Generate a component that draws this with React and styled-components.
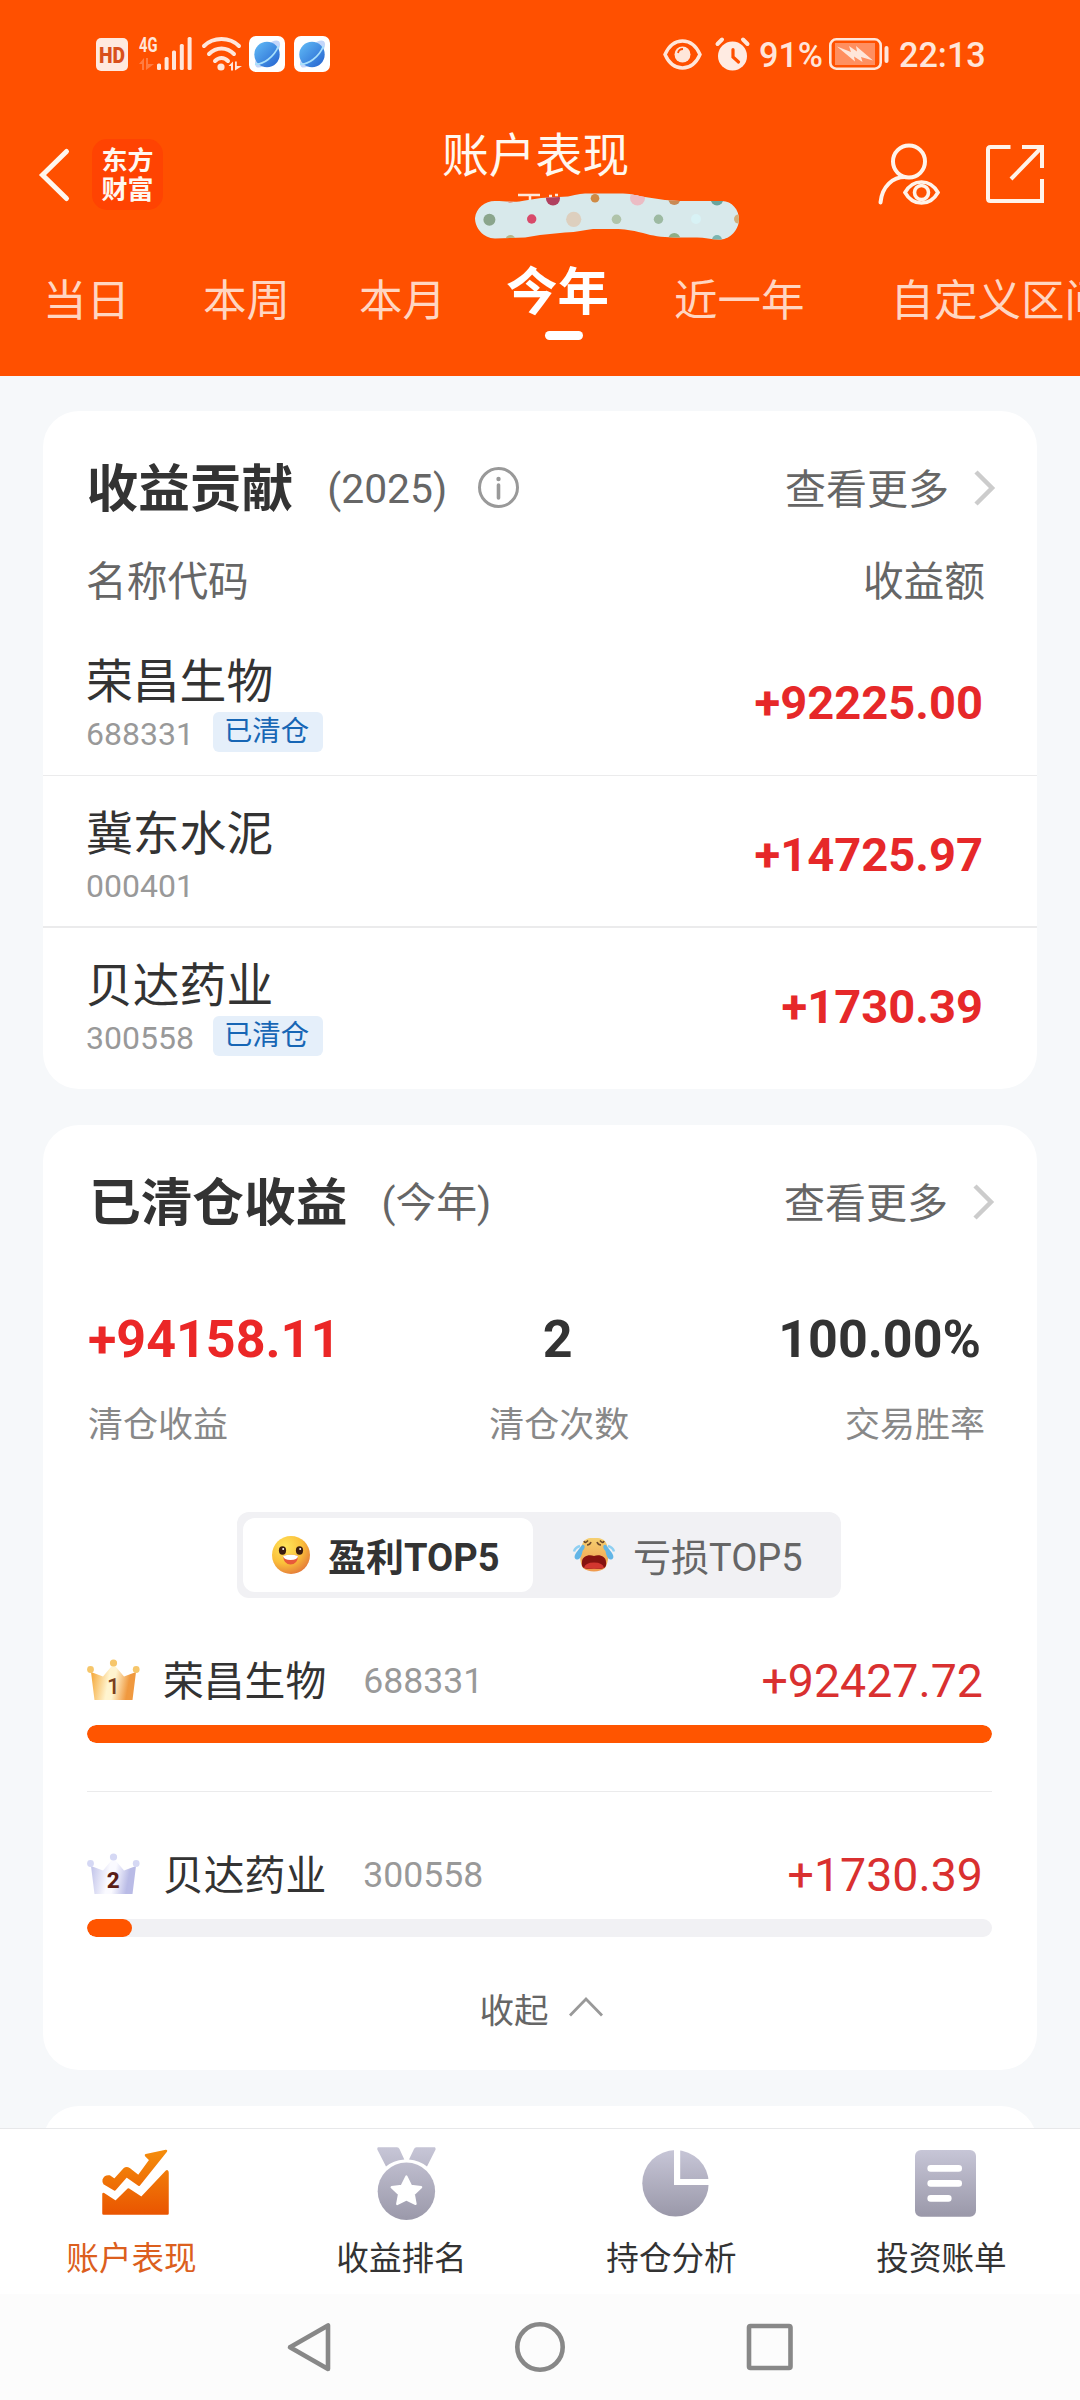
import React from "react";
import styled, { createGlobalStyle } from "styled-components";

const GlobalStyle = createGlobalStyle`
  *, *::before, *::after { box-sizing: border-box; }
  body { margin: 0; background: #f6f8fa; }
  svg { display: block; flex: none; overflow: visible; }
`;

const Screen = styled.div`
  width: 1080px;
  height: 2400px;
  overflow: hidden;
  display: flex;
  flex-direction: column;
  background: #f6f8fa;
  color: #333;
  font-family: Roboto, "Noto Sans CJK SC", sans-serif;
  white-space: nowrap;
`;

/* ---------- header ---------- */
const Header = styled.header`
  flex: none;
  height: 376px;
  background: #ff5000;
  color: #fff8f0;
  overflow: hidden;
`;

const StatusBar = styled.div`
  height: 108px;
  padding: 0 96px;
  display: flex;
  align-items: center;
  justify-content: space-between;
`;

const StatusGroup = styled.div`
  display: flex;
  align-items: center;
`;

const Spacer = styled.span`
  flex: none;
  width: ${(p) => p.$w}px;
`;

const StatusText = styled.span`
  width: ${(p) => p.$w}px;
  font-size: 34.2px;
  font-weight: 500;
  line-height: 40px;
  padding-top: 2px;
  color: #ffe6da;
`;

const NavBar = styled.div`
  height: 134px;
  padding: 0 36px 0 39px;
  display: flex;
  align-items: flex-start;
`;

const BackButton = styled.div`
  width: 53px;
  padding-top: 40px;
`;

const BrandLogo = styled.div`
  width: 71px;
  height: 71px;
  margin-top: 31px;
  padding-top: 8px;
  border-radius: 15px;
  background: #ff4302;
  text-align: center;
  font-size: 26px;
  line-height: 29px;
  font-weight: 700;
`;

const TitleBlock = styled.div`
  margin-left: 279px;
  padding-top: 18px;
`;

const PageTitle = styled.h1`
  margin: 0;
  font-size: 46.8px;
  line-height: 60px;
  font-weight: 400;
`;

const AccountMask = styled.div`
  margin: 4px 0 0 33px;
`;

const NavActions = styled.div`
  margin-left: auto;
  padding-top: 35px;
  display: flex;
  gap: 46px;
`;

const PeriodTabs = styled.nav`
  display: flex;
  padding-left: 43px;
`;

const PeriodTab = styled.span`
  flex: none;
  margin-left: ${(p) => p.$gap}px;
  padding-top: ${(p) => (p.$active ? 21 : 30)}px;
  display: flex;
  flex-direction: column;
  align-items: center;
  font-size: ${(p) => (p.$active ? 51.5 : 43.5)}px;
  font-weight: ${(p) => (p.$active ? 700 : 400)};
  line-height: 60px;
  color: ${(p) => (p.$active ? "#fff" : "#ffd6c2")};

  &::after {
    content: "";
    display: ${(p) => (p.$active ? "block" : "none")};
    width: 38px;
    height: 9px;
    margin: 8px 0 0 12px;
    border-radius: 5px;
    background: #fff;
  }
`;

/* ---------- cards ---------- */
const Content = styled.main`
  flex: 1;
  min-height: 0;
  overflow: hidden;
  padding: 35px 43px 0;
  display: flex;
  flex-direction: column;
  gap: 36px;
`;

const Card = styled.section`
  flex: none;
  height: ${(p) => p.$h}px;
  padding-top: 43px;
  border-radius: 36px;
  background: #fff;
`;

const CardHeader = styled.div`
  height: 72px;
  padding: 0 ${(p) => p.$end}px 0 ${(p) => p.$start}px;
  display: flex;
  align-items: center;
`;

const CardTitle = styled.h2`
  margin: 0 ${(p) => p.$gap}px 0 0;
  font-size: 51.7px;
  font-weight: 700;
  line-height: 72px;
`;

const CardNote = styled.span`
  font-size: 40.8px;
  line-height: 70px;
  padding-bottom: 2px;
  color: #666;
  margin-right: 31px;
`;

const MoreLink = styled.span`
  margin-left: auto;
  display: flex;
  align-items: center;
  gap: 25px;
  font-size: 41px;
  line-height: 71px;
  color: #666;

  svg { margin-top: -5px; }
`;

const ColumnHeads = styled.div`
  height: 98px;
  padding: 26px 52px 0 43px;
  display: flex;
  justify-content: space-between;
  font-size: 40.7px;
  line-height: 60px;
  color: #666;
`;

const StockRow = styled.div`
  height: ${(p) => p.$h}px;
  padding: 30px 54px 0 43px;
  display: flex;
  justify-content: space-between;
  border-bottom: ${(p) => p.$line}px solid #ebebec;
`;

const StockName = styled.div`
  font-size: 46.8px;
  line-height: 56px;
`;

const StockMeta = styled.div`
  height: 42px;
  display: flex;
  align-items: flex-start;
  gap: 19px;
  padding-top: 2px;
`;

const StockCode = styled.span`
  width: 108px;
  font-size: 32px;
  line-height: 40px;
  padding-top: 2px;
  color: #999;
`;

const Tag = styled.span`
  width: 110px;
  height: 40px;
  padding-right: 3px;
  border-radius: 6px;
  background: #e5effa;
  color: #1766b5;
  font-size: 28.4px;
  line-height: 40px;
  text-align: center;
`;

const Gain = styled.span`
  font-size: 47.1px;
  line-height: 97px;
  font-weight: 700;
  color: #e62829;
`;

/* ---------- closed positions ---------- */
const Stats = styled.div`
  margin-top: 70px;
  padding: 0 52px 0 45px;
  display: flex;
  justify-content: space-between;
`;

const Stat = styled.div`
  display: flex;
  flex-direction: column;
  align-items: ${(p) => p.$align};
`;

const StatValue = styled.span`
  font-size: 52px;
  line-height: 60px;
  font-weight: 700;
  color: ${(p) => (p.$gain ? "#eb2727" : "#333")};
  margin-right: ${(p) => p.$inset || 0}px;
`;

const StatLabel = styled.span`
  margin-top: 31px;
  font-size: 35px;
  line-height: 50px;
  color: #888;
`;

const Segmented = styled.div`
  width: 604px;
  height: 86px;
  margin: 61px 0 0 194px;
  padding: 6px;
  display: flex;
  border-radius: 12px;
  background: #f1f1f4;
`;

const Segment = styled.div`
  width: 290px;
  height: 74px;
  padding: 0 0 2px ${(p) => (p.$active ? 28 : 39)}px;
  display: flex;
  align-items: center;
  gap: 17px;
  border-radius: 12px;
  background: ${(p) => (p.$active ? "#fff" : "transparent")};
  color: ${(p) => (p.$active ? "#333" : "#666")};
  font-size: 38px;
  font-weight: ${(p) => (p.$active ? 700 : 400)};

  svg { margin-top: 2px; }
`;

const RankItem = styled.div`
  margin: 0 45px 0 44px;
  padding: 52px 0 48px;
  border-bottom: ${(p) => (p.$last ? 0 : 1)}px solid #ebebec;
`;

const RankLine = styled.div`
  height: 64px;
  display: flex;
  align-items: center;
  line-height: 64px;

  > svg { margin-bottom: 5px; }
`;

const RankName = styled.span`
  margin-left: 23px;
  font-size: 40.8px;
`;

const RankCode = styled.span`
  margin-left: 37px;
  padding-bottom: 3px;
  line-height: 60px;
  font-size: 35.6px;
  color: #999;
`;

const RankGain = styled.span`
  margin-left: auto;
  margin-right: 9px;
  padding-bottom: 3px;
  line-height: 60px;
  font-size: 46.5px;
  color: #d93030;
`;

const Track = styled.div`
  height: 18px;
  margin-top: 11px;
  border-radius: 9px;
  background: #f1f1f4;
  overflow: hidden;
`;

const Fill = styled.div`
  height: 100%;
  border-radius: 9px;
  background: #ff5500;
`;

const Collapse = styled.div`
  height: 52px;
  padding-left: 2px;
  display: flex;
  justify-content: center;
  align-items: center;
  gap: 20px;
  font-size: 34.5px;
  line-height: 52px;
  color: #666;
`;

/* ---------- bottom ---------- */
const TabBar = styled.nav`
  flex: none;
  height: 166px;
  display: flex;
  background: #fff;
  border-top: 1px solid #e7e8ea;
`;

const TabItem = styled.div`
  width: 270px;
  padding-top: 13px;
  display: flex;
  flex-direction: column;
  align-items: center;
`;

const TabLabel = styled.span`
  margin: 17px 7px 0 0;
  font-size: 32.6px;
  line-height: 40px;
  color: ${(p) => (p.$active ? "#dc5f1e" : "#333")};
`;

const SystemNav = styled.div`
  flex: none;
  height: 106px;
  display: flex;
  align-items: center;
  justify-content: center;
  gap: 180px;
  background: #fcfcfc;
`;

/* ---------- icons ---------- */
const pale = "#ffe6da";

const HdIcon = () => (
  <svg width="32" height="33" viewBox="0 0 32 33">
    <rect width="32" height="33" rx="5" fill="#ffe9df" />
    <text x="16" y="24.5" textAnchor="middle" textLength="26" lengthAdjust="spacingAndGlyphs" fontSize="21.5" fontWeight="900" fill="#d9501c">HD</text>
  </svg>
);

const SignalIcon = () => (
  <svg width="53" height="34" viewBox="0 0 53 34" fill={pale}>
    <text x="0" y="15" textLength="18.5" lengthAdjust="spacingAndGlyphs" fontSize="20" fontWeight="700">4G</text>
    <path d="M0 27l5-6v12H3v-6zM7 33V21h2v6h6zM10 33V21z" opacity=".3" />
    <rect x="18" y="26.5" width="4" height="6.5" rx="1.5" />
    <rect x="25.6" y="20" width="4" height="13" rx="1.5" />
    <rect x="33" y="13.5" width="4" height="19.5" rx="1.5" />
    <rect x="40.8" y="7" width="4" height="26" rx="1.5" />
    <rect x="48.6" y="0" width="4" height="33" rx="1.5" />
  </svg>
);

const WifiIcon = () => (
  <svg width="41" height="34" viewBox="0 0 41 34" fill="none" stroke={pale} strokeWidth="4" strokeLinecap="round">
    <path d="M2 9Q9 2 19.500 2T37 9M7 17Q12.500 11.500 19.500 11.500T32 17M13 24Q16 21 19.500 21T26 24" />
    <circle cx="19" cy="30" r="3.600" fill={pale} stroke="none" />
    <path d="M26.500 29l4.500-4.500v9h-2V29zM33 33.500v-9h1.800V29H40z" fill={pale} stroke="none" />
  </svg>
);

const PlanetApp = ({ id }) => (
  <svg width="36" height="36" viewBox="0 0 36 36">
    <defs>
      <linearGradient id={id} x1="0" y1="0" x2="1" y2="1">
        <stop offset="0" stopColor="#62bdf7" />
        <stop offset="1" stopColor="#2461cf" />
      </linearGradient>
    </defs>
    <rect width="36" height="36" rx="7" fill="#fff" />
    <ellipse cx="18.500" cy="18" rx="17" ry="7" transform="rotate(-48 18.500 18)" fill="#c3d6fa" />
    <circle cx="18" cy="18.500" r="12.700" fill={`url(#${id})`} />
    <path d="M6 28c8 1 19-7 23.500-18" fill="none" stroke="#a8e0fb" strokeWidth="1.800" />
  </svg>
);

const EyeIcon = () => (
  <svg width="39" height="31" viewBox="0 0 39 31">
    <path d="M2 15.500C10-2.500 29-2.500 37 15.500C29 33.500 10 33.500 2 15.500Z" fill="none" stroke={pale} strokeWidth="3.400" />
    <circle cx="19.500" cy="15.500" r="8" fill={pale} />
    <path d="M15 14q.7-4 5-4" stroke="#ff5000" strokeWidth="1.800" fill="none" />
  </svg>
);

const AlarmIcon = () => (
  <svg width="35" height="34" viewBox="0 0 35 34" strokeLinecap="round" fill="none">
    <circle cx="17.500" cy="19" r="14.500" fill="#ffebe2" />
    <path d="M2.500 7l4.500-4.500M28 2.500L32.500 7" stroke={pale} strokeWidth="4" />
    <path d="M18 12.500v7.500l5.500 5" stroke="#ff5000" strokeWidth="3.200" />
  </svg>
);

const BatteryIcon = () => (
  <svg width="60" height="32" viewBox="0 0 60 32">
    <rect x="1.300" y="1.300" width="50.400" height="29.400" rx="6" fill="none" stroke={pale} strokeWidth="2.600" />
    <rect x="6" y="5" width="40" height="22" fill="#ff8f60" />
    <path d="M8 8.500L22 14L20 8L28 13.500L27 8L44 22.500L32 19L33.500 24L25 18.500L26 23.500Z" fill={pale} />
    <rect x="55.500" y="8" width="4" height="17" rx="2" fill={pale} />
  </svg>
);

const BackIcon = () => (
  <svg width="31" height="54" viewBox="0 0 31 54" fill="none" stroke="#fff6ee" strokeWidth="5" strokeLinecap="round">
    <path d="M27.500 3.500L3.500 27l24 23.500" />
  </svg>
);

const MaskStroke = () => (
  <svg width="264" height="50" viewBox="0 0 264 50">
    <defs>
      <clipPath id="mask-band">
        <path d="M0 28C1 18 10 11 20 11C32 11 40 13 50 10.500L66 8L93 6.500C103 4 108 3.500 115 3.500H148C158 4 162 5.500 170 7L190 10L205 11H247C257 11 264 20 264 29C264 40 255 49 246 49.500C238 50 230 47.500 222 47.500H200C185 47 178 46 168 43C155 40 150 39 140 39H118C108 40 103 42 90 42.500L65 45L50 47.500L20 48.500C8 48 0 38 0 28Z" />
      </clipPath>
    </defs>
    <path d="M43 5h22M55 5v6M74 6h3M80 5h3" stroke="#ffe7d8" strokeWidth="2.500" fill="none" />
    <g clipPath="url(#mask-band)">
      <rect width="264" height="50" fill="#d8e9eb" />
      <circle cx="14.400" cy="29.700" r="6" fill="#8aa58c" />
      <circle cx="35.400" cy="8" r="5" fill="#e3a495" />
      <circle cx="35.400" cy="50" r="5" fill="#b5b58a" />
      <circle cx="56.700" cy="29" r="4.700" fill="#d84a6a" />
      <circle cx="78" cy="8.500" r="7" fill="#b0405f" />
      <circle cx="98.700" cy="29.300" r="7.600" fill="#ddcfbe" />
      <circle cx="120" cy="8.300" r="4.300" fill="#cf8a45" />
      <circle cx="141.500" cy="29.300" r="4.800" fill="#b0c4aa" />
      <circle cx="162.500" cy="8" r="7.500" fill="#ebbcc4" />
      <circle cx="183.500" cy="29.300" r="4.700" fill="#9dbaa2" />
      <circle cx="199.300" cy="9" r="6" fill="#c98a55" />
      <circle cx="199.300" cy="49" r="6" fill="#8fae85" />
      <circle cx="221" cy="29" r="5" fill="#d8f2f5" />
      <circle cx="242" cy="9" r="6.500" fill="#6aa59d" />
      <circle cx="242" cy="50" r="5" fill="#7ab5b0" />
      <circle cx="263.500" cy="29" r="4.500" fill="#d2ae78" />
    </g>
  </svg>
);

const UserEyeIcon = () => (
  <svg width="62" height="62" viewBox="0 0 62 62" fill="none" stroke="#fff3ea" strokeWidth="4" strokeLinecap="round">
    <circle cx="31" cy="18.500" r="16" />
    <path d="M2.500 59.500C4 43 15 34 27 34" />
    <path d="M27 49.500C35 35.500 52 35.500 60 49.500C52 63.500 35 63.500 27 49.500Z" strokeWidth="3.600" />
    <circle cx="43.500" cy="49.500" r="7" strokeWidth="3.600" />
  </svg>
);

const ShareIcon = () => (
  <svg width="58" height="62" viewBox="0 0 58 62" fill="none" stroke="#fff3ea" strokeWidth="4">
    <path d="M24.500 4H4.500Q2 4 2 6.500V55.500Q2 58 4.500 58H56V36" />
    <path d="M36 4H56V25M56 4L25 36" />
  </svg>
);

const InfoIcon = () => (
  <svg width="41" height="41" viewBox="0 0 41 41" style={{ marginTop: -6 }}>
    <circle cx="20.500" cy="20.500" r="19" fill="none" stroke="#999" strokeWidth="3" />
    <circle cx="20.500" cy="12" r="2.200" fill="#999" />
    <path d="M20.500 18v13" stroke="#999" strokeWidth="3.600" strokeLinecap="round" />
  </svg>
);

const ChevronRight = () => (
  <svg width="21" height="36" viewBox="0 0 21 36" fill="none" stroke="#ccc" strokeWidth="4.500">
    <path d="M2 2L18 18L2 34" />
  </svg>
);

const ChevronUp = () => (
  <svg width="34" height="20" viewBox="0 0 34 20" fill="none" stroke="#999" strokeWidth="2.800" style={{ marginTop: -8 }}>
    <path d="M1 18.500L17 2L33 18.500" />
  </svg>
);

const SmileIcon = () => (
  <svg width="40" height="40" viewBox="0 0 40 40">
    <defs>
      <radialGradient id="smile-face" cx=".35" cy=".28" r=".8">
        <stop offset="0" stopColor="#ffe55c" />
        <stop offset=".55" stopColor="#fbc03a" />
        <stop offset="1" stopColor="#e2743a" />
      </radialGradient>
    </defs>
    <circle cx="20" cy="20" r="19" fill="url(#smile-face)" />
    <ellipse cx="11.500" cy="15.500" rx="3.600" ry="4.200" fill="#3d1d10" />
    <ellipse cx="28.500" cy="15.500" rx="3.600" ry="4.200" fill="#3d1d10" />
    <circle cx="12.200" cy="14" r="1" fill="#fff" />
    <circle cx="29.200" cy="14" r="1" fill="#fff" />
    <path d="M12 21Q20 18.500 27 21Q26.500 29.500 19.500 29.500Q13 29.500 12 21Z" fill="#e85a3a" />
    <path d="M12 21Q20 18.500 27 21Q26.500 25 19.500 25Q13 25 12 21Z" fill="#fff" />
  </svg>
);

const CryIcon = () => (
  <svg width="44" height="36" viewBox="0 0 44 36">
    <defs>
      <linearGradient id="cry-face" x1="0" y1="0" x2="0" y2="1">
        <stop offset="0" stopColor="#f5cf70" />
        <stop offset="1" stopColor="#f09a4c" />
      </linearGradient>
    </defs>
    <path d="M10 8C12 1 17 1 22 1S33 1 35 8C37 15 37 25 33 31C28 35.500 16 35.500 11 31C7 25 8 14 10 8Z" fill="url(#cry-face)" />
    <path d="M10 8C14 7 13 12 10.500 14C10 18 8 23 5 22.500C1.500 22 2 18 5.500 14Z" fill="#62b5e6" />
    <path d="M34 8C30 7 31 12 33.500 14C34 18 36 23 39 22.500C42.500 22 42 18 38.500 14Z" fill="#62b5e6" />
    <path d="M2 14.500Q3 10.500 8 9M42 14.500Q41 10.500 36 9" stroke="#8fd0f2" strokeWidth="2.400" fill="none" />
    <path d="M12 4q1 3 4-.5M15 8q3 0 4-3M32 4q-1 3-4-.5M29 8q-3 0-4-3" stroke="#6e4a2c" strokeWidth="1.600" fill="none" />
    <path d="M22 19C27 17 34 19 34 25C35 32 31 32 22 31.500C13 32 9 32 10 25C10 19 17 17 22 19Z" fill="#85120f" />
    <path d="M12 31Q13 25.500 22 25.500T32 31Q22 32.500 12 31Z" fill="#d2362f" />
  </svg>
);

const crownColors = {
  1: { edge: "#f5a93b", mid: "#fff4cf", far: "#f0993f", ball: "#f6c66a", text: "#7a3f20" },
  2: { edge: "#c3c5ea", mid: "#fafaff", far: "#b9bbe6", ball: "#d5d8f4", text: "#5b1f18" },
};

const Crown = ({ rank }) => {
  const c = crownColors[rank];
  return (
    <svg width="53" height="42" viewBox="0 0 53 42">
      <defs>
        <linearGradient id={`crown-${rank}`} x1="0" y1="0" x2="1" y2=".15">
          <stop offset=".05" stopColor={c.edge} />
          <stop offset=".45" stopColor={c.mid} />
          <stop offset=".58" stopColor={c.mid} />
          <stop offset=".9" stopColor={c.far} />
        </linearGradient>
      </defs>
      <path d="M4 13L16 17.500L26.500 5L37 17.500L49 13L45.500 41H7.500Z" fill={`url(#crown-${rank})`} />
      <circle cx="3.500" cy="10.500" r="3.400" fill={c.ball} />
      <circle cx="26.500" cy="4" r="3.600" fill={c.ball} />
      <circle cx="49.200" cy="10.500" r="3.400" fill={c.ball} />
      <text x="26.300" y="34.500" textAnchor="middle" fontSize="22.500" fontWeight={rank === 1 ? 500 : 800} fill={c.text}>{rank}</text>
    </svg>
  );
};

const TabGradient = ({ id, from, to }) => (
  <defs>
    <linearGradient id={id} gradientUnits="userSpaceOnUse" x1="40" y1="6" x2="40" y2="76">
      <stop offset="0" stopColor={from} />
      <stop offset="1" stopColor={to} />
    </linearGradient>
  </defs>
);

const PerformanceIcon = () => (
  <svg width="80" height="80" viewBox="0 0 80 80" fill="url(#tab-perf)" stroke="url(#tab-perf)" strokeWidth="2.500" strokeLinejoin="round">
    <TabGradient id="tab-perf" from="#f58f0c" to="#e95200" />
    <path d="M71 9L51 13.300L55.500 18L43.500 34.500L34 27Q31.500 25.500 29 27.500L19.500 38L14.500 34.500Q10 34 8.700 38Q8.300 40 9.500 41.500L19.700 47.500L31.500 34L44 42.700Z" />
    <path d="M8.500 52L20.800 60L33.500 47.500L46.500 56L71.500 29.500Q72.500 29 72.500 31V71.500H8.500Z" />
  </svg>
);

const MedalIcon = () => (
  <svg width="80" height="80" viewBox="0 0 80 80" fill="url(#tab-medal)">
    <TabGradient id="tab-medal" from="#c6c5d6" to="#9c9aab" />
    <path d="M13 5.300H32Q33.800 5.300 34.500 7L39.300 17.500Q28 18.500 21 24.500L12.300 7.500Q12 5.500 13 5.300Z" />
    <path d="M69.800 5.300H51.500Q49.700 5.300 49 7L44 17.500Q54.500 18.500 62 24.500L70.600 7.500Q70.800 5.500 69.800 5.300Z" />
    <circle cx="41.400" cy="49.300" r="28.700" />
    <path d="M41.400 34.500L46 43.800L56.200 45.200L48.800 52.300L50.600 62L41.400 57.500L32.200 62L34 52.300L26.600 45.200L36.800 43.800Z" fill="#fff" stroke="#fff" strokeWidth="2.200" strokeLinejoin="round" />
  </svg>
);

const PieIcon = () => (
  <svg width="80" height="80" viewBox="0 0 80 80" fill="url(#tab-pie)">
    <TabGradient id="tab-pie" from="#c8c7d8" to="#9997a8" />
    <circle cx="40.500" cy="41.300" r="33.200" />
    <path d="M39 0H45.200V37H80V43H39Z" fill="#fff" />
  </svg>
);

const BillIcon = () => (
  <svg width="80" height="80" viewBox="0 0 80 80" fill="url(#tab-bill)">
    <TabGradient id="tab-bill" from="#c8c7d8" to="#9997a8" />
    <rect x="10" y="8" width="61" height="66.700" rx="6" />
    <rect x="22.400" y="23" width="34.600" height="6.700" rx="3.300" fill="#fff" />
    <rect x="22.400" y="38" width="34.600" height="6.700" rx="3.300" fill="#fff" />
    <rect x="22.400" y="53" width="24.200" height="6.700" rx="3.300" fill="#fff" />
  </svg>
);

const SystemIcon = ({ children }) => (
  <svg width="50" height="50" viewBox="0 0 50 50" fill="none" stroke="#888" strokeWidth="4.600" strokeLinejoin="round">
    {children}
  </svg>
);

/* ---------- data ---------- */
const periods = [
  { label: "当日", gap: 0 },
  { label: "本周", gap: 73 },
  { label: "本月", gap: 69 },
  { label: "今年", gap: 60, active: true },
  { label: "近一年", gap: 65 },
  { label: "自定义区间", gap: 86 },
];

const stocks = [
  { name: "荣昌生物", code: "688331", gain: "+92225.00", closed: true, line: 1, h: 152 },
  { name: "冀东水泥", code: "000401", gain: "+14725.97", closed: false, line: 2, h: 152 },
  { name: "贝达药业", code: "300558", gain: "+1730.39", closed: true, line: 0, h: 150 },
];

const ranks = [
  { name: "荣昌生物", code: "688331", gain: "+92427.72", share: 100 },
  { name: "贝达药业", code: "300558", gain: "+1730.39", share: 5 },
];

const tabs = [
  { label: "账户表现", Icon: PerformanceIcon, active: true },
  { label: "收益排名", Icon: MedalIcon },
  { label: "持仓分析", Icon: PieIcon },
  { label: "投资账单", Icon: BillIcon },
];

const More = () => (
  <MoreLink>
    查看更多
    <ChevronRight />
  </MoreLink>
);

export default function App() {
  return (
    <Screen>
      <GlobalStyle />
      <Header>
        <StatusBar>
          <StatusGroup>
            <HdIcon />
            <Spacer $w={11} />
            <SignalIcon />
            <Spacer $w={10} />
            <WifiIcon />
            <Spacer $w={6} />
            <PlanetApp id="planet-a" />
            <Spacer $w={9} />
            <PlanetApp id="planet-b" />
          </StatusGroup>
          <StatusGroup>
            <EyeIcon />
            <Spacer $w={13} />
            <AlarmIcon />
            <Spacer $w={9} />
            <StatusText $w={62}>91%</StatusText>
            <Spacer $w={8} />
            <BatteryIcon />
            <Spacer $w={10} />
            <StatusText $w={85}>22:13</StatusText>
          </StatusGroup>
        </StatusBar>
        <NavBar>
          <BackButton><BackIcon /></BackButton>
          <BrandLogo>东方<br />财富</BrandLogo>
          <TitleBlock>
            <PageTitle>账户表现</PageTitle>
            <AccountMask><MaskStroke /></AccountMask>
          </TitleBlock>
          <NavActions>
            <UserEyeIcon />
            <ShareIcon />
          </NavActions>
        </NavBar>
        <PeriodTabs>
          {periods.map((p) => (
            <PeriodTab key={p.label} $gap={p.gap} $active={p.active}>{p.label}</PeriodTab>
          ))}
        </PeriodTabs>
      </Header>

      <Content>
        <Card $h={678}>
          <CardHeader $start={43.5} $end={42}>
            <CardTitle $gap={34}>收益贡献</CardTitle>
            <CardNote>(2025)</CardNote>
            <InfoIcon />
            <More />
          </CardHeader>
          <ColumnHeads>
            <span>名称代码</span>
            <span>收益额</span>
          </ColumnHeads>
          {stocks.map((s) => (
            <StockRow key={s.code} $line={s.line} $h={s.h}>
              <div>
                <StockName>{s.name}</StockName>
                <StockMeta>
                  <StockCode>{s.code}</StockCode>
                  {s.closed && <Tag>已清仓</Tag>}
                </StockMeta>
              </div>
              <Gain>{s.gain}</Gain>
            </StockRow>
          ))}
        </Card>

        <Card $h={945}>
          <CardHeader $start={46} $end={43}>
            <CardTitle $gap={34}>已清仓收益</CardTitle>
            <CardNote>(今年)</CardNote>
            <More />
          </CardHeader>
          <Stats>
            <Stat $align="flex-start">
              <StatValue $gain>+94158.11</StatValue>
              <StatLabel>清仓收益</StatLabel>
            </Stat>
            <Stat $align="center">
              <StatValue $inset={3}>2</StatValue>
              <StatLabel>清仓次数</StatLabel>
            </Stat>
            <Stat $align="flex-end">
              <StatValue $inset={4}>100.00%</StatValue>
              <StatLabel>交易胜率</StatLabel>
            </Stat>
          </Stats>
          <Segmented>
            <Segment $active><SmileIcon />盈利TOP5</Segment>
            <Segment><CryIcon />亏损TOP5</Segment>
          </Segmented>
          {ranks.map((r, i) => (
            <RankItem key={r.code} $last={i === ranks.length - 1}>
              <RankLine>
                <Crown rank={i + 1} />
                <RankName>{r.name}</RankName>
                <RankCode>{r.code}</RankCode>
                <RankGain>{r.gain}</RankGain>
              </RankLine>
              <Track>
                <Fill style={{ width: `${r.share}%` }} />
              </Track>
            </RankItem>
          ))}
          <Collapse>
            收起
            <ChevronUp />
          </Collapse>
        </Card>

        <Card $h={300} />
      </Content>

      <TabBar>
        {tabs.map(({ label, Icon, active }) => (
          <TabItem key={label}>
            <Icon />
            <TabLabel $active={active}>{label}</TabLabel>
          </TabItem>
        ))}
      </TabBar>
      <SystemNav>
        <SystemIcon><path d="M43 3.500V47L5 25.300Z" /></SystemIcon>
        <SystemIcon><circle cx="25" cy="25" r="22.700" /></SystemIcon>
        <SystemIcon><rect x="4" y="4" width="41.500" height="42" rx="1.500" /></SystemIcon>
      </SystemNav>
    </Screen>
  );
}
